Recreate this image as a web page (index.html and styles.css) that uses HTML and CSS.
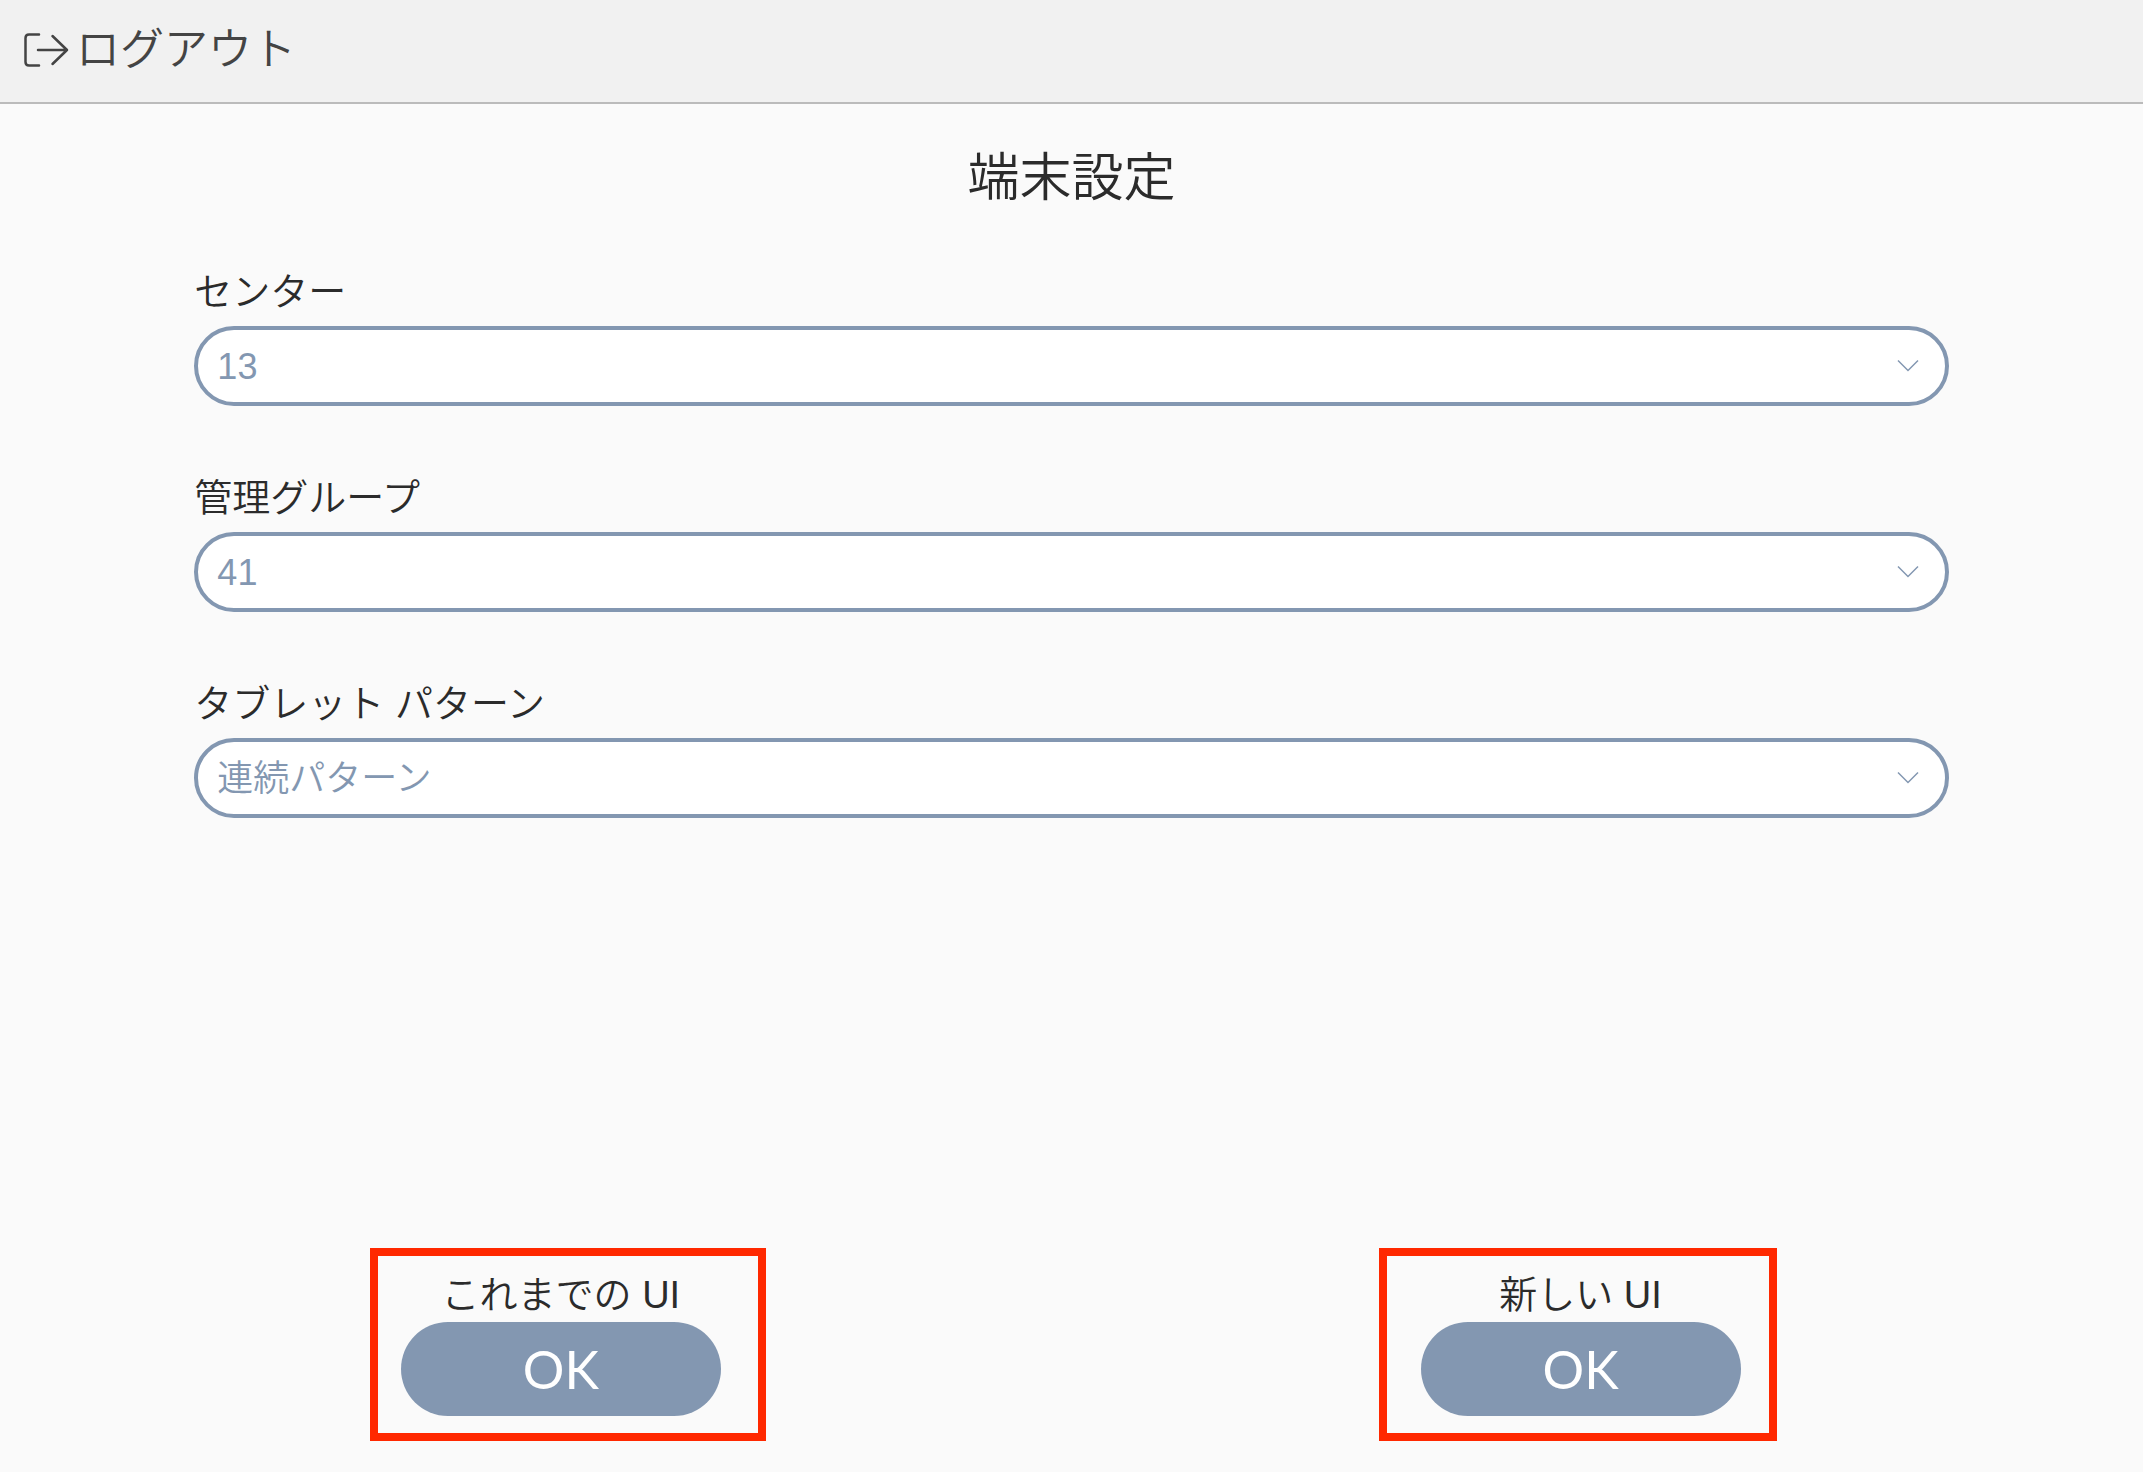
FILE: index.html
```html
<!DOCTYPE html>
<html lang="ja">
  <head>
    <meta charset="UTF-8" />
    <meta name="viewport" content="width=device-width, initial-scale=1.0" />
    <title>端末設定</title>
    <link rel="stylesheet" href="styles.css">
  </head>
  <body>
    <header class="header">
      <button type="button" class="logout">
        <svg class="logout-icon" viewBox="0 0 46 36" aria-hidden="true">
          <path d="M17 2.500H7Q3.500 2.500 3.500 6V30Q3.500 33.500 7 33.500H17" />
          <path d="M16 18H45M30.500 4L45 18L30.500 32" />
        </svg>
        <span>ログアウト</span>
      </button>
    </header>
    <main class="main">
      <h1 class="title">端末設定</h1>
      <form class="form">
        <div class="field">
          <label for="center">センター</label>
          <div class="select-box">
            <select id="center" name="center">
              <option>13</option>
            </select>
            <svg class="chevron" viewBox="0 0 22 14" aria-hidden="true">
              <path d="M1 1.500L11 11.500L21 1.500" />
            </svg>
          </div>
        </div>
        <div class="field">
          <label for="group">管理グループ</label>
          <div class="select-box">
            <select id="group" name="group">
              <option>41</option>
            </select>
            <svg class="chevron" viewBox="0 0 22 14" aria-hidden="true">
              <path d="M1 1.500L11 11.500L21 1.500" />
            </svg>
          </div>
        </div>
        <div class="field">
          <label for="pattern">タブレット パターン</label>
          <div class="select-box">
            <select id="pattern" name="pattern">
              <option>連続パターン</option>
            </select>
            <svg class="chevron" viewBox="0 0 22 14" aria-hidden="true">
              <path d="M1 1.500L11 11.500L21 1.500" />
            </svg>
          </div>
        </div>
        <div class="actions">
          <div class="action action-old">
            <span class="action-label" id="old-ui">これまでの UI</span>
            <button type="submit" class="ok" aria-describedby="old-ui">OK</button>
          </div>
          <div class="action action-new">
            <span class="action-label" id="new-ui">新しい UI</span>
            <button type="submit" class="ok" aria-describedby="new-ui">OK</button>
          </div>
        </div>
      </form>
    </main>
  </body>
</html>
```
FILE: styles.css
```css
* {
  box-sizing: border-box;
}
body {
  min-height: 100vh;
  margin: 0;
  display: flex;
  flex-direction: column;
  background-color: #fafafa;
  color: #2b2b2b;
  font-family: "Liberation Sans", "Noto Sans CJK JP", sans-serif;
  font-weight: 350;
}
button,
select {
  font-family: inherit;
  font-weight: inherit;
  cursor: pointer;
}
.header {
  height: 104px;
  padding: 0 22px 3px;
  display: flex;
  align-items: center;
  background-color: #f1f1f1;
  border-bottom: 2px solid #bbb;
}
.logout {
  padding: 0;
  display: flex;
  align-items: center;
  gap: 8px;
  border: none;
  background: none;
  color: #444;
  font-size: 44px;
  line-height: 60px;
}
.logout-icon {
  width: 46px;
  height: 36px;
  overflow: visible;
  fill: none;
  stroke: currentColor;
  stroke-width: 2.5;
  stroke-linecap: round;
  stroke-linejoin: round;
}
.main {
  flex: 1;
  display: flex;
  flex-direction: column;
}
.title {
  margin: 36px 0 48px;
  text-align: center;
  font-size: 52px;
  font-weight: inherit;
  line-height: 76px;
}
.form {
  flex: 1;
  display: flex;
  flex-direction: column;
  gap: 64px;
}
.field {
  padding: 0 9.07%;
  display: flex;
  flex-direction: column;
  gap: 6px;
}
.field label {
  font-size: 38px;
  line-height: 56px;
}
.select-box {
  display: grid;
  align-items: center;
}
.select-box > * {
  grid-area: 1 / 1;
}
.select-box select {
  width: 100%;
  height: 80px;
  padding: 0 72px 0 19px;
  border: 4px solid #8397b1;
  border-radius: 40px;
  appearance: none;
  background-color: #fff;
  color: #8397b1;
  font-size: 36px;
}
.chevron {
  width: 22px;
  height: 14px;
  margin-right: 30px;
  justify-self: end;
  pointer-events: none;
  fill: none;
  stroke: #8397b1;
  stroke-width: 1.5;
}
.actions {
  margin-top: auto;
  padding: 0 17.1% 31px 17.26%;
  display: flex;
  justify-content: space-between;
}
.action {
  padding-top: 12px;
  padding-bottom: 17px;
  display: flex;
  flex-direction: column;
  align-items: center;
  border: 8px solid #ff2800;
}
.action-old {
  padding-left: 23px;
  padding-right: 37px;
}
.action-new {
  padding-left: 34px;
  padding-right: 28px;
}
.action-label {
  font-size: 38px;
  line-height: 54px;
}
.ok {
  width: 320px;
  height: 94px;
  border: none;
  border-radius: 47px;
  background-color: #8397b1;
  color: #fff;
  font-family: Lato, sans-serif;
  font-size: 52px;
  font-weight: 400;
}
.ok:hover {
  opacity: 0.8;
}
```
